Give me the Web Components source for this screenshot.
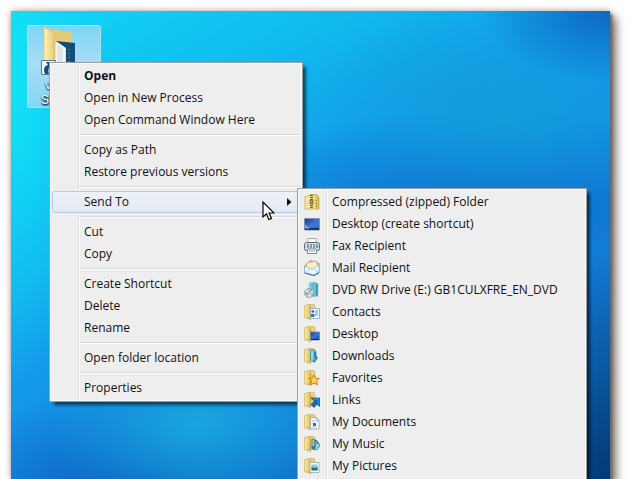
<!DOCTYPE html>
<html lang="en">
<head>
<meta charset="utf-8">
<title>Desktop</title>
<style>
html,body{margin:0;height:100%;overflow:hidden;background:#fff}
body{font:12px/22px "Open Sans","Noto Sans",sans-serif;color:#111}
</style>
</head>
<body>
<desk-top>
  <desk-shortcut slot="icon">v<br>Sh</desk-shortcut>
  <context-menu slot="menu" label="Shortcut menu">
    <menu-entry strong>Open</menu-entry>
    <menu-entry>Open in New Process</menu-entry>
    <menu-entry>Open Command Window Here</menu-entry>
    <menu-line></menu-line>
    <menu-entry>Copy as Path</menu-entry>
    <menu-entry>Restore previous versions</menu-entry>
    <menu-line></menu-line>
    <menu-entry active>Send To</menu-entry>
    <menu-line></menu-line>
    <menu-entry>Cut</menu-entry>
    <menu-entry>Copy</menu-entry>
    <menu-line></menu-line>
    <menu-entry>Create Shortcut</menu-entry>
    <menu-entry>Delete</menu-entry>
    <menu-entry>Rename</menu-entry>
    <menu-line></menu-line>
    <menu-entry>Open folder location</menu-entry>
    <menu-line></menu-line>
    <menu-entry>Properties</menu-entry>
  </context-menu>
  <context-menu slot="submenu" label="Send To">
    <menu-entry icon="zip">Compressed (zipped) Folder</menu-entry>
    <menu-entry icon="screen">Desktop (create shortcut)</menu-entry>
    <menu-entry icon="fax">Fax Recipient</menu-entry>
    <menu-entry icon="mail">Mail Recipient</menu-entry>
    <menu-entry icon="dvd">DVD RW Drive (E:) GB1CULXFRE_EN_DVD</menu-entry>
    <menu-entry icon="contacts">Contacts</menu-entry>
    <menu-entry icon="desktop">Desktop</menu-entry>
    <menu-entry icon="downloads">Downloads</menu-entry>
    <menu-entry icon="favorites">Favorites</menu-entry>
    <menu-entry icon="links">Links</menu-entry>
    <menu-entry icon="documents">My Documents</menu-entry>
    <menu-entry icon="music">My Music</menu-entry>
    <menu-entry icon="pictures">My Pictures</menu-entry>
  </context-menu>
  <mouse-pointer slot="pointer"></mouse-pointer>
</desk-top>
<script>
const defs = `<defs>
<linearGradient id="y" x1="0" x2="1"><stop offset="0" stop-color="#f9edaa"/><stop offset="1" stop-color="#e0bd58"/></linearGradient>
<linearGradient id="b" x1="0" y1="0" x2="1" y2="1"><stop offset="0" stop-color="#17358e"/><stop offset=".5" stop-color="#3d74d6"/><stop offset="1" stop-color="#163c9c"/></linearGradient>
<linearGradient id="t" x1="0" x2="1"><stop offset="0" stop-color="#8adcea"/><stop offset="1" stop-color="#2794ae"/></linearGradient></defs>`;
const folder = `<path d="M5 .5h5l1 2v11H5z" fill="#ecd07c" stroke="#c9a850" stroke-width=".6"/><path d="M.5 1.500L5 .5l1.500 2V14L.5 14z" fill="url(#y)" stroke="#cdaa50" stroke-width=".6"/><path d="M3 14l3.500 1.500V3" fill="none" stroke="#b8913a" stroke-width=".7"/>`;
const icons = {
  zip: `<path d="M1 2.500l5-1V.5h7l2 3V15H1z" fill="url(#y)" stroke="#c4a040" stroke-width=".7"/><path d="M5 2v13m5-13v13" stroke="#f8e797"/><path d="M7.500 1v13" stroke="#554d36" stroke-width="2.500" stroke-dasharray="1 1"/><path d="M6 6h3v4H6z" fill="#a99a64" stroke="#5d5539" stroke-width=".6"/><path d="M12.500 6v8" stroke="#7c6b36" stroke-dasharray="1 2"/>`,
  screen: `<path d="M.5 2.500h15V14H.5z" fill="url(#b)" stroke="#8194b0"/><path d="M1 13h14" stroke="#14244c" stroke-width="1.500"/><path d="M1 12c4-1 8-4 14-7v7z" fill="#4a83dc" opacity=".5"/><path d="M2 9v3h3" fill="none" stroke="#b0d4f6"/>`,
  fax: `<path d="M4 5V.5h8V5" fill="#fff" stroke="#8499a8" stroke-width=".8"/><rect x=".5" y="4.500" width="15" height="8" rx="2" fill="#d4dde3" stroke="#596672"/><path d="M3 7h2m1 0h2m1 0h2m1 0h2M3 9h2m1 0h2m1 0h2" stroke="#425a6c" stroke-width="1.200"/><path d="M12 8h2v2h-2z" fill="#65a958"/><path d="M4 11h8l1 4.500H3z" fill="#f8fbfd" stroke="#637482" stroke-width=".8"/><path d="M5 13h6" stroke="#8ea9bb"/>`,
  mail: `<path d="M.5 6l6-5.500L15 3.500v8L10 15.500.5 13z" fill="#b9d5e9" stroke="#688eae" stroke-width=".8"/><path d="M2 7l1-4 9-2 2 5-6 5z" fill="#fff1cc" stroke="#e3a452" stroke-width=".9"/><path d="M.5 6l7.500 3 7-4v8l-5 2.500L.5 13z" fill="#eaf5fd" stroke="#81a5c0" stroke-width=".6"/><path d="M1 13l6-5 8 4" fill="none" stroke="#a9c4d8" stroke-width=".8"/><path d="M1 13l9 2.500 5-3" fill="none" stroke="#38769e" stroke-width="1.200"/>`,
  dvd: `<path d="M5 1l6-1 3 2v12l-8 1z" fill="url(#t)" stroke="#79bfce" stroke-width=".6"/><path d="M11 1v13" stroke="#a7e3ec" stroke-width=".7"/><circle cx="5" cy="11" r="4.500" fill="#b9c4c8" stroke="#81979e" stroke-width=".8"/><path d="M5 11L2 8m3 3l4-2M5 11l1 4" stroke="#f5ffff" stroke-width="1.500"/><path d="M2 12l3-1 3-3" stroke="#738a92" fill="none"/><circle cx="5" cy="11" r="1.200" fill="#fff" stroke="#6a7c82" stroke-width=".6"/>`,
  contacts: folder + `<path d="M6.500 4.500h9v10h-9z" fill="#eef8ff" stroke="#80a6bd" stroke-width=".8"/><path d="M11 7h3m-3 2h3m-3 2h3" stroke="#5d9cdc"/><circle cx="8.800" cy="7.500" r="1.300" fill="#375e78"/><path d="M7 13V10h3.500v3z" fill="#3d7994"/>`,
  desktop: folder + `<path d="M6.500 6h9v8h-9z" fill="url(#b)" stroke="#6985ac" stroke-width=".8"/><path d="M7 13.500h8" stroke="#122451"/><path d="M7 13c4-1 5-4 8-5v5z" fill="#2c66c9" opacity=".5"/>`,
  downloads: folder + `<path d="M6.500 2h4l1.500 2v5h1.500L10 14.500 6.500 11z" fill="url(#t)" stroke="#23809a" stroke-width=".7"/><path d="M8 3v8" stroke="#b3edf4"/><path d="M11 4v5l2 1-3 4" stroke="#155f9c" fill="none"/>`,
  favorites: folder + `<path d="M10 5l1.500 3.200 3.800.3-2.900 2.400 1 3.900L10 13l-3.400 1.800 1-3.900-2.900-2.400 3.800-.3z" fill="#ffda53" stroke="#da7712"/>`,
  links: folder + `<path d="M7 6h8.500v8.500l-2.500-2.500-3 3.500-3-3 3.500-3.500z" fill="#1768b9" stroke="#154575" stroke-width=".7"/><path d="M9 7h5.500v5" fill="none" stroke="#4098e0"/>`,
  documents: folder + `<path d="M6.500 3.500h6l2.500 2.500v9H6.500z" fill="#f9fcff" stroke="#91a6b7" stroke-width=".8"/><path d="M12 4v3h3" fill="#c5d4df" stroke="#8da5b6" stroke-width=".6"/><path d="M8 7h3m-3 2h1m-1 4h5" stroke="#abc0d3"/><path d="M9 9h3v3H9z" fill="#3f719f"/>`,
  music: folder + `<path d="M8 3l4 1c5 4 4 8 0 10l-4-1z" fill="#9ccdd6" stroke="#397b89" stroke-width=".8"/><path d="M11 4v7M11 4c1 2 3 2 3 4" stroke="#176073" fill="none"/><ellipse cx="9.500" cy="11.500" rx="2" ry="1.500" fill="#217f8e"/>`,
  pictures: folder + `<path d="M6 4.500h9v10H6z" fill="#f7fbfd" stroke="#8fa6b4" stroke-width=".8"/><path d="M7.500 6.500h6v6h-6z" fill="#8ac9df"/><path d="M7.500 9l3 1 3-1v3.500h-6z" fill="#36745d"/>`
};
class Base extends HTMLElement{
  constructor(){super();this.attachShadow({mode:'open'})}
  connectedCallback(){this.shadowRoot.innerHTML=this.view()}
}
customElements.define('desk-top', class extends Base{view(){return `<style>
:host{display:flex;box-sizing:border-box;height:100vh;padding:11px 20px 0 11px}
main{flex:1;position:relative;box-shadow:2px 3px 3px #6b6663,6px 6px 9px #7b7570,0 0 7px #bda8a5;
background:
radial-gradient(ellipse 170px 230px at 100% 100%,#033a76 0,#06468688 50%,transparent),
radial-gradient(ellipse 130px 70px at 100% 0,#0c68c0 0,transparent),
radial-gradient(ellipse 200px 110px at 82% 22%,#129bdb 0,transparent),
radial-gradient(ellipse 280px 80px at 80% 38%,#0b6ccb 0,transparent),
radial-gradient(ellipse 150px 95px at 31% 88%,#18a5df 0,transparent),
radial-gradient(ellipse 230px 110px at 23% 104%,#0b5fbb 0,transparent),
radial-gradient(ellipse 90px 300px at 0 15%,#11e4f6 0,#12d8f6aa 45%,transparent),
linear-gradient(150deg,#12d9f5 0,#10b8ee 25%,#149bea 45%,#1585e2 65%,#0962b3 100%)}
.clip{position:absolute;inset:0;overflow:hidden}
slot::slotted(*){position:absolute}
slot[name=icon]::slotted(*){left:16px;top:14px}
slot[name=menu]::slotted(*){left:38px;top:51px;width:254px}
slot[name=submenu]::slotted(*){left:286px;top:177px;width:290px;bottom:-8px}
slot[name=pointer]::slotted(*){left:251px;top:190px}
</style><main><div class="clip"><slot name="icon"></slot><slot name="menu"></slot><slot name="submenu"></slot><slot name="pointer"></slot></div></main>`}});
customElements.define('desk-shortcut', class extends Base{view(){return `<style>
:host{display:block;width:74px}
button{display:flex;flex-direction:column;align-items:flex-start;width:100%;height:83px;padding:1px 0 0 13px;border:1px solid #a4e2f5;border-radius:2px;background:linear-gradient(#7dd5f2,#a9dcf6 45%,#85d6f5);font:12px/15px "Liberation Sans",sans-serif;color:#fff;text-shadow:0 1px 2px #000,1px 1px 2px #123}
svg{flex:none}
</style><button><svg width="48" height="51" viewBox="0 0 48 51"><defs><linearGradient id="f" x1="0" x2="1"><stop offset="0" stop-color="#fdf3b4"/><stop offset="1" stop-color="#e9cc78"/></linearGradient></defs>
<path d="M4 1l16 3 11 1v40H4z" fill="#e6ca74"/><path d="M14 14l8 2 3 4v26H14z" fill="#f7f7f7" stroke="#aab4b9" stroke-width=".6"/><path d="M15 14l19 2v30h-9V21z" fill="#104d79"/><path d="M17 18v26m2-25v25m2-24v25" stroke="#cbd0d2"/><path d="M28 22v24" stroke="#378eb4" stroke-width="2" stroke-dasharray="1 3"/><path d="M3 0l10 6v26L3 42z" fill="url(#f)" stroke="#d8bc69" stroke-width=".6"/>
<path d="M.5 33.500h14v14H.5z" fill="#f1f7fb" stroke="#677c89"/><path d="M4 47c-2-5-1-8 3-9l-2-3h8v8l-3-3c-3 1-3 3-2 7z" fill="#15498e"/></svg><span><slot></slot></span></button>`}});
customElements.define('context-menu', class extends Base{view(){return `<style>
:host{display:block;box-sizing:border-box;border:1px solid #98a0a6;background:#eee;box-shadow:inset 0 0 0 1px #f8f8f8,4px 4px 3px -1px #0009}
div{box-sizing:border-box;height:100%;padding:2px;background:linear-gradient(#dfdfdf,#dfdfdf) 28px 1px/1px calc(100% - 2px) no-repeat,linear-gradient(#fff,#fff) 29px 1px/1px calc(100% - 2px) no-repeat}
</style><div role="menu" aria-label="${this.getAttribute('label')}"><slot></slot></div>`}});
customElements.define('menu-line', class extends Base{view(){return `<style>
:host{display:block;padding:3px 0 3px 27px}hr{margin:0;border:0;border-top:1px solid #d8d8d8;border-bottom:1px solid #fff}
</style><hr>`}});
customElements.define('menu-entry', class extends Base{view(){
const i=this.getAttribute('icon'),on=this.hasAttribute('active');
return `<style>
:host{display:block}
button{box-sizing:border-box;display:grid;grid-template-columns:28px 1fr 12px;align-items:center;width:100%;height:22px;padding:0 0 0 3px;border:1px solid transparent;border-radius:3px;background:none;font:inherit;line-height:20px;color:inherit;text-align:left;white-space:nowrap}
:host([active]) button{border-color:#aecbe9;background:linear-gradient(#edf1f7,#e4eaf4)}
:host([strong]) button{font-weight:700}
svg{display:block}
</style><button role="menuitem"${on?' aria-haspopup="true" aria-expanded="true"':''}><span>${i?`<svg width="16" height="16" viewBox="0 0 16 16">${defs}${icons[i]}</svg>`:''}</span><span><slot></slot></span>${on?'<svg width="5" height="8" viewBox="0 0 5 8"><path d="M0 0l4.500 4L0 8z" fill="#111"/></svg>':''}</button>`}});
customElements.define('mouse-pointer', class extends Base{view(){return `<style>:host{display:block;pointer-events:none}svg{display:block}</style>
<svg width="13" height="20" viewBox="0 0 13 20"><path d="M1 1v15l3.500-3.200 2.300 5.700 2.700-1.100-2.400-5.400H12z" fill="#fff" stroke="#000" stroke-width="1.200"/></svg>`}});
</script>
</body>
</html>
